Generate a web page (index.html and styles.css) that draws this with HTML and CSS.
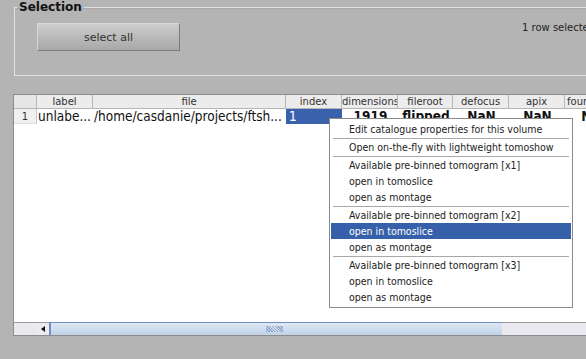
FILE: index.html
```html
<!DOCTYPE html>
<html lang="en">
<head>
  <meta charset="UTF-8">
  <title>Catalogue</title>
  <link rel="stylesheet" href="styles.css">
</head>
<body>
<fieldset class="selection">
  <legend>Selection</legend>
  <div class="sel-bar">
    <button type="button" class="btn">select all</button>
    <span class="sel-count">1 row selected</span>
  </div>
</fieldset>

<div class="table">
  <div class="thead">
    <div class="th corner"></div>
    <div class="th">label</div>
    <div class="th">file</div>
    <div class="th">index</div>
    <div class="th">dimensions</div>
    <div class="th">fileroot</div>
    <div class="th">defocus</div>
    <div class="th">apix</div>
    <div class="th last">fourier</div>
  </div>
  <div class="trow">
    <div class="td rownum">1</div>
    <div class="td">unlabe...</div>
    <div class="td">/home/casdanie/projects/ftsh...</div>
    <div class="td sel">1</div>
    <div class="td c">1919</div>
    <div class="td c">flipped</div>
    <div class="td c">NaN</div>
    <div class="td c">NaN</div>
    <div class="td c">NaN</div>
  </div>
  <div class="tbody-fill"></div>
  <div class="hscroll">
    <div class="hs-corner"></div>
    <div class="hs-arrow"><span class="tri"></span></div>
    <div class="hs-handle"><span class="grip"></span></div>
    <div class="hs-track"></div>
  </div>

  <div class="menu">
    <div class="mi">Edit catalogue properties for this volume</div>
    <div class="sep"></div>
    <div class="mi">Open on-the-fly with lightweight tomoshow</div>
    <div class="sep"></div>
    <div class="mi">Available pre-binned tomogram [x1]</div>
    <div class="mi">open in tomoslice</div>
    <div class="mi">open as montage</div>
    <div class="sep"></div>
    <div class="mi">Available pre-binned tomogram [x2]</div>
    <div class="mi hl">open in tomoslice</div>
    <div class="mi">open as montage</div>
    <div class="sep"></div>
    <div class="mi">Available pre-binned tomogram [x3]</div>
    <div class="mi">open in tomoslice</div>
    <div class="mi">open as montage</div>
  </div>
</div>
</body>
</html>
```

FILE: styles.css
```css
html, body {
  margin: 0;
  padding: 0;
}
body {
  width: 586px;
  height: 359px;
  overflow: hidden;
  background: #b4b4b4;
  font-family: "DejaVu Sans", sans-serif;
  color: #222;
}
.selection {
  margin: 0 0 0 14px;
  padding: 0;
  width: 600px;
  height: 74px;
  border: 1px solid #e2e2e2;
  border-right: none;
  box-shadow: inset 0 1px 0 #a8a8a8;
}
.selection legend {
  padding: 0 2px;
  margin-left: 2px;
  font-size: 12px;
  font-weight: bold;
  color: #111;
  line-height: 14px;
}
.sel-bar {
  display: flex;
  align-items: flex-start;
  padding: 9px 0 0 22px;
}
.btn {
  width: 143px;
  height: 28px;
  border: 1px solid #8e8e8e;
  border-color: #d8d8d8 #7c7c7c #7c7c7c #d8d8d8;
  background: linear-gradient(#cdcdcd, #b8b8b8 55%, #a9a9a9);
  font-family: "DejaVu Sans", sans-serif;
  font-size: 11px;
  color: #333;
  padding: 0;
}
.sel-count {
  margin: -1px 0 0 342px;
  font-size: 10px;
  white-space: nowrap;
  color: #222;
}
.table {
  position: relative;
  margin: 18px 0 0 13px;
  width: 600px;
  height: 240px;
  background: #fff;
  border: 1px solid #8c8c8c;
  border-right: none;
  display: flex;
  flex-direction: column;
}
.thead, .trow {
  display: grid;
  grid-template-columns: 23px 56px 193px 56px 56px 55px 56px 56px 60px;
}
.thead {
  height: 13px;
  background: #ececec;
  border-bottom: 1px solid #b5b5b5;
}
.th {
  font-size: 10px;
  line-height: 13px;
  text-align: center;
  color: #333;
  border-right: 1px solid #b8b8b8;
  white-space: nowrap;
  overflow: hidden;
}
.th.corner {
  background: #e6e6e6;
}
.th.last {
  text-align: left;
  padding-left: 2px;
}
.trow {
  height: 15px;
}
.td {
  font-family: "DejaVu Sans Condensed", "DejaVu Sans", sans-serif;
  font-size: 13.5px;
  line-height: 15px;
  color: #111;
  white-space: nowrap;
  overflow: hidden;
  padding-left: 1px;
}
.td.c {
  text-align: center;
  font-weight: bold;
}
.td.rownum {
  font-family: "DejaVu Sans", sans-serif;
  font-size: 10px;
  text-align: center;
  background: #f0f0f0;
  border-right: 1px solid #c8c8c8;
  border-bottom: 1px solid #dcdcdc;
  padding: 0;
  color: #333;
}
.td.sel {
  background: #3a61ab;
  color: #fff;
  padding-left: 3px;
}
.tbody-fill {
  flex: 1;
}
.hscroll {
  display: flex;
  height: 12px;
  border-top: 1px solid #9a9a9a;
}
.hs-corner {
  width: 23px;
  background: #eaeaee;
}
.hs-arrow {
  width: 12px;
  background: #ececf0;
  display: flex;
  align-items: center;
  justify-content: center;
}
.tri {
  width: 0;
  height: 0;
  border-top: 3px solid transparent;
  border-bottom: 3px solid transparent;
  border-right: 4px solid #111;
}
.hs-handle {
  width: 451px;
  background: linear-gradient(#dfe8f3, #c0d2e6);
  border-left: 2px solid #6f8fc4;
  margin-top: -1px;
  border-top: 1px solid #6f8fc4;
  display: flex;
  justify-content: center;
  align-items: center;
}
.grip {
  width: 17px;
  height: 6px;
  margin-right: 4px;
  background-image: repeating-linear-gradient(45deg, #8ea6cc 0 1px, transparent 1px 2px);
}
.hs-track {
  flex: 1;
  background: #e9e9ef;
}
.menu {
  position: absolute;
  left: 315px;
  top: 23px;
  width: 240px;
  background: #fff;
  border: 1px solid #8a8a8a;
  padding: 2px 1px;
  font-family: "DejaVu Sans Condensed", "DejaVu Sans", sans-serif;
  font-size: 10.5px;
  color: #222;
}
.mi {
  height: 16px;
  line-height: 16px;
  padding-left: 18px;
  white-space: nowrap;
}
.mi.hl {
  background: #3760aa;
  color: #fff;
}
.sep {
  height: 1px;
  margin: 1px 2px 0;
  background: #a8a8a8;
}
```
